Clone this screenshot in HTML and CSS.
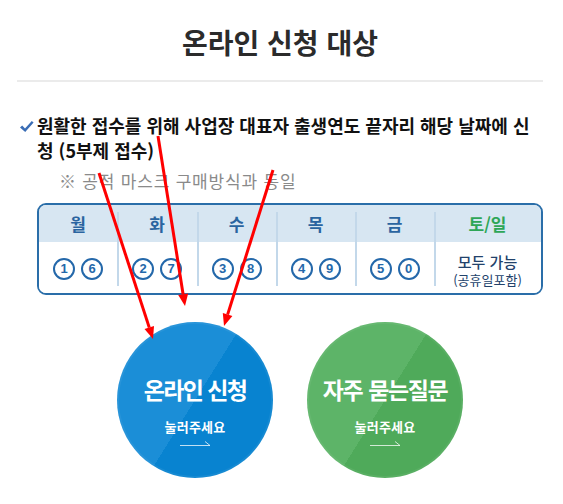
FILE: index.html
```html
<!DOCTYPE html>
<html lang="ko">
<head>
<meta charset="utf-8">
<title>온라인 신청 대상</title>
<link rel="stylesheet" href="styles.css">
</head>
<body>
<div class="page">
  <h1 class="title">온라인 신청 대상</h1>
  <div class="notice">
    <svg class="check" width="14" height="12" viewBox="0 0 14 12"><polygon points="0,6.5 2.2,4.6 5,7.6 11.8,0 13.6,1.4 5.2,11" fill="#3a6db5"/></svg>
    <p class="notice-text">원활한 접수를 위해 사업장 대표자 출생연도 끝자리 해당 날짜에 신청 (5부제 접수)</p>
  </div>
  <p class="sub">※ 공적 마스크 구매방식과 동일</p>
  <div class="schedule">
    <div class="col first"><div class="day">월</div><div class="nums"><span class="num">1</span><span class="num">6</span></div></div>
    <div class="col"><div class="day">화</div><div class="nums"><span class="num">2</span><span class="num">7</span></div></div>
    <div class="col"><div class="day">수</div><div class="nums"><span class="num">3</span><span class="num">8</span></div></div>
    <div class="col"><div class="day">목</div><div class="nums"><span class="num">4</span><span class="num">9</span></div></div>
    <div class="col"><div class="day">금</div><div class="nums"><span class="num">5</span><span class="num">0</span></div></div>
    <div class="col"><div class="day weekend">토/일</div><div class="all"><span class="all-main">모두 가능</span><span class="all-sub">(공휴일포함)</span></div></div>
  </div>
  <div class="buttons">
    <a class="circle blue" href="#">
      <span class="circle-title">온라인 신청</span>
      <span class="circle-label">눌러주세요</span>
      <svg class="circle-arrow" width="32" height="6" viewBox="0 0 32 6"><path d="M1 5.5 H31 L26 1.5" fill="none" stroke="rgba(255,255,255,0.75)" stroke-width="1"/></svg>
    </a>
    <a class="circle green" href="#">
      <span class="circle-title tight">자주 묻는질문</span>
      <span class="circle-label">눌러주세요</span>
      <svg class="circle-arrow" width="32" height="6" viewBox="0 0 32 6"><path d="M1 5.5 H31 L26 1.5" fill="none" stroke="rgba(255,255,255,0.75)" stroke-width="1"/></svg>
    </a>
  </div>
  <svg class="annot" width="563" height="504" viewBox="0 0 563 504">
    <g stroke="#ff0000" stroke-width="3" fill="none">
      <line x1="99" y1="173" x2="149.3" y2="327.6"/>
      <line x1="158" y1="136" x2="183.1" y2="294.2"/>
      <line x1="273" y1="170" x2="227.6" y2="314.6"/>
    </g>
    <g fill="#ff0000">
      <polygon points="153,339 144.5,329.1 154.0,326.0"/>
      <polygon points="185,306 178.2,294.9 188.1,293.4"/>
      <polygon points="224,326 222.8,313.0 232.4,316.1"/>
    </g>
  </svg>
</div>
</body>
</html>
```

FILE: styles.css
```css
* { box-sizing: border-box; }

body {
  margin: 0;
  background: #ffffff;
  font-family: "Noto Sans CJK KR", "Noto Sans", sans-serif;
  color: #222222;
}

.page {
  position: relative;
  width: 563px;
  height: 504px;
  padding: 0 20px 0 17px;
  overflow: hidden;
}

.title {
  margin: 0;
  padding: 25px 0 21px;
  font-size: 28px;
  line-height: 34px;
  font-weight: 700;
  text-align: center;
  color: #2b2b2b;
  border-bottom: 2px solid #ebebeb;
}

.notice {
  display: flex;
  align-items: flex-start;
  margin-top: 31px;
}

.check {
  flex: none;
  margin: 8px 3px 0 3px;
}

.notice-text {
  margin: 0;
  font-size: 18px;
  line-height: 25px;
  font-weight: 700;
  color: #111111;
  letter-spacing: 0;
  word-break: break-all;
}

.sub {
  margin: 5px 0 0 42px;
  font-size: 17px;
  line-height: 25px;
  color: #8a8a8a;
  letter-spacing: 0.8px;
}

.schedule {
  display: grid;
  grid-template-columns: 78px 80px 79px 79px 79px 1fr;
  margin: 10px 0 0 20px;
  height: 92px;
  border: 2px solid #2a6ea9;
  border-radius: 9px;
  overflow: hidden;
}

.col {
  display: flex;
  flex-direction: column;
  background:
    linear-gradient(#c3d8ea, #c3d8ea) left center / 2px calc(100% - 14px) no-repeat,
    linear-gradient(#d7e6f2 37px, #ffffff 37px);
}

.col.first {
  background: linear-gradient(#d7e6f2 37px, #ffffff 37px);
}

.day {
  height: 37px;
  line-height: 37px;
  text-align: center;
  font-size: 17px;
  font-weight: 700;
  color: #2a64a0;
}

.day.weekend {
  color: #2ea657;
}

.nums {
  flex: 1;
  display: flex;
  align-items: center;
  justify-content: center;
  gap: 6px;
  padding-top: 2px;
}

.num {
  display: flex;
  align-items: center;
  justify-content: center;
  width: 22px;
  height: 22px;
  border: 2px solid #2468aa;
  border-radius: 50%;
  font-size: 13px;
  font-weight: 700;
  color: #2468aa;
  font-family: "Liberation Sans", "Noto Sans", sans-serif;
}

.all {
  flex: 1;
  display: flex;
  flex-direction: column;
  align-items: center;
  justify-content: center;
  padding-top: 6px;
  color: #22426b;
}

.all-main {
  font-size: 15px;
  line-height: 18px;
  font-weight: 500;
}

.all-sub {
  font-size: 13px;
  line-height: 17px;
}

.buttons {
  display: flex;
  gap: 34px;
  margin-top: 27px;
  padding-left: 100px;
}

.circle {
  display: flex;
  flex-direction: column;
  align-items: center;
  width: 156px;
  height: 156px;
  border-radius: 50%;
  padding-top: 53px;
  color: #ffffff;
  text-decoration: none;
}

.circle.blue {
  background: linear-gradient(122deg, #1b8ed7 50%, #0883d0 50%);
  box-shadow: inset 0 0 0 2px rgba(255, 255, 255, 0.06);
}

.circle.green {
  background: linear-gradient(122deg, #5db468 50%, #4faa5a 50%);
  box-shadow: inset 0 0 0 2px rgba(255, 255, 255, 0.06);
}

.circle-title {
  font-size: 23px;
  line-height: 28px;
  font-weight: 700;
  letter-spacing: -1.6px;
  white-space: nowrap;
}

.circle-title.tight {
  letter-spacing: -1.4px;
  word-spacing: 1px;
}

.circle-label {
  margin-top: 15px;
  font-size: 13px;
  line-height: 18px;
  font-weight: 700;
  letter-spacing: 0.2px;
}

.circle-arrow {
  display: block;
  margin-top: 4px;
}

.annot {
  position: absolute;
  top: 0;
  left: 0;
  pointer-events: none;
}
```
